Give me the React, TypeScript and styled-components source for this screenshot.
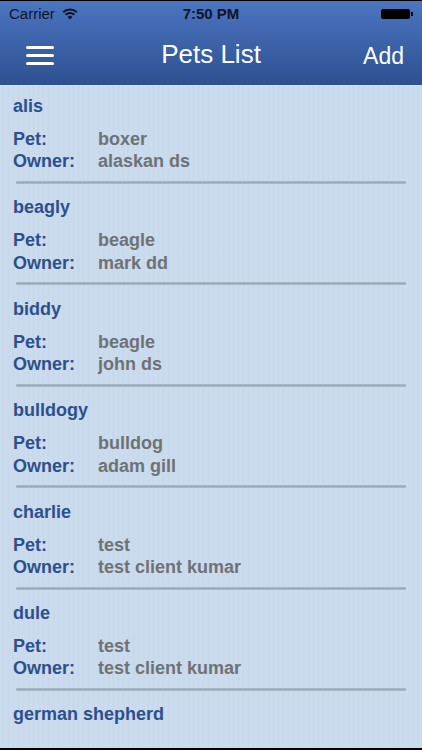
import React from "react";
import styled, { createGlobalStyle } from "styled-components";

const GlobalStyle = createGlobalStyle`
  html, body {
    margin: 0;
    padding: 0;
    background: #000;
  }
  body {
    font-family: "Liberation Sans", Arial, sans-serif;
  }
`;

const Screen = styled.div`
  width: 422px;
  height: 750px;
  box-sizing: border-box;
  border-top: 1px solid #000;
  border-bottom: 2px solid #000;
  overflow: hidden;
  display: flex;
  flex-direction: column;
  background: #c9dbed;
`;

const Header = styled.header`
  background: linear-gradient(#4c76c2 0%, #4168b0 35%, #2d5090 100%);
  border-bottom: 1px solid #d6e4f3;
  flex-shrink: 0;
`;

const StatusBar = styled.div`
  height: 25px;
  display: grid;
  grid-template-columns: 1fr auto 1fr;
  align-items: center;
  padding: 0 9px;
  color: #0c1526;
  font-size: 15px;
`;

const Carrier = styled.div`
  display: flex;
  align-items: center;
  gap: 7px;
`;

const Clock = styled.div`
  font-weight: bold;
  font-size: 15px;
`;

const Battery = styled.div`
  justify-self: end;
  display: flex;
  align-items: center;
`;

const BatteryBody = styled.span`
  width: 29px;
  height: 10px;
  background: #000;
  border-radius: 2px;
`;

const BatteryNub = styled.span`
  width: 2px;
  height: 4px;
  margin-left: 1px;
  background: #000;
`;

const NavBar = styled.nav`
  height: 59px;
  display: grid;
  grid-template-columns: 80px 1fr 80px;
  align-items: center;
  color: #fff;
`;

const MenuButton = styled.button`
  justify-self: start;
  margin-left: 26px;
  width: 28px;
  padding: 0;
  border: 0;
  background: none;
  display: flex;
  flex-direction: column;
  gap: 5px;
`;

const MenuBar = styled.span`
  display: block;
  height: 3px;
  border-radius: 2px;
  background: #fff;
`;

const Title = styled.h1`
  margin: -2px 0 0;
  text-align: center;
  font-weight: normal;
  font-size: 26px;
`;

const AddButton = styled.span`
  justify-self: end;
  margin-right: 18px;
  margin-top: 1px;
  font-size: 23px;
`;

const List = styled.ul`
  list-style: none;
  margin: 0;
  padding: 0;
  flex: 1;
  background:
    repeating-linear-gradient(
      90deg,
      rgba(255, 255, 255, 0.025) 0px,
      rgba(255, 255, 255, 0.025) 2px,
      rgba(0, 0, 0, 0.006) 2px,
      rgba(0, 0, 0, 0.006) 5px
    ),
    #c9dbed;
`;

const Item = styled.li`
  padding: 10px 0 3.4px;
`;

const Name = styled.div`
  padding-left: 13px;
  font-weight: bold;
  font-size: 18px;
  line-height: 20px;
  color: #2d4f8c;
`;

const Details = styled.dl`
  margin: 12px 0 0;
  padding-left: 13px;
  display: grid;
  grid-template-columns: 85px 1fr;
  font-weight: bold;
  font-size: 18px;
  line-height: 22.4px;
`;

const Label = styled.dt`
  color: #2d4f8c;
`;

const Value = styled.dd`
  margin: 0;
  color: #6f7275;
`;

const Divider = styled.hr`
  margin: 8.2px 16px 0 16px;
  height: 3px;
  border: 0;
  border-radius: 1px;
  background: linear-gradient(#b1c0d0, #97a8ba 50%, #b3c2d2);
`;

const WifiIcon = () => (
  <svg width="16" height="12" viewBox="0 0 16 12">
    <path d="M8 11.5 L5.6 8.9 A3.5 3.5 0 0 1 10.4 8.9 Z" fill="#0c1526" />
    <path
      d="M3.6 6.8 A6.3 6.3 0 0 1 12.4 6.8"
      stroke="#0c1526"
      strokeWidth="1.9"
      fill="none"
    />
    <path
      d="M1.2 4.3 A9.8 9.8 0 0 1 14.8 4.3"
      stroke="#0c1526"
      strokeWidth="1.9"
      fill="none"
    />
  </svg>
);

type Pet = { name: string; pet?: string; owner?: string };

const pets: Pet[] = [
  { name: "alis", pet: "boxer", owner: "alaskan ds" },
  { name: "beagly", pet: "beagle", owner: "mark dd" },
  { name: "biddy", pet: "beagle", owner: "john ds" },
  { name: "bulldogy", pet: "bulldog", owner: "adam gill" },
  { name: "charlie", pet: "test", owner: "test client kumar" },
  { name: "dule", pet: "test", owner: "test client kumar" },
  { name: "german shepherd" },
];

export default function App() {
  return (
    <Screen>
      <GlobalStyle />
      <Header>
        <StatusBar>
          <Carrier>
            Carrier
            <WifiIcon />
          </Carrier>
          <Clock>7:50 PM</Clock>
          <Battery>
            <BatteryBody />
            <BatteryNub />
          </Battery>
        </StatusBar>
        <NavBar>
          <MenuButton aria-label="Menu">
            <MenuBar />
            <MenuBar />
            <MenuBar />
          </MenuButton>
          <Title>Pets List</Title>
          <AddButton>Add</AddButton>
        </NavBar>
      </Header>
      <List>
        {pets.map((p) => (
          <Item key={p.name}>
            <Name>{p.name}</Name>
            {p.pet && (
              <>
                <Details>
                  <Label>Pet:</Label>
                  <Value>{p.pet}</Value>
                  <Label>Owner:</Label>
                  <Value>{p.owner}</Value>
                </Details>
                <Divider />
              </>
            )}
          </Item>
        ))}
      </List>
    </Screen>
  );
}
